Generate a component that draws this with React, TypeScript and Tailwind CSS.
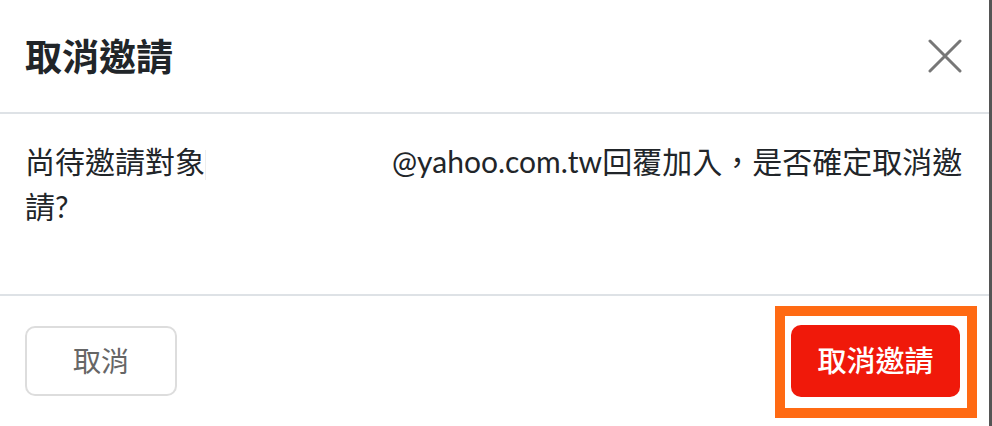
import React from 'react';

const font = { fontFamily: "Lato, 'Noto Sans CJK TC', sans-serif" };

function CloseIcon() {
  return (
    <svg width="34" height="34" viewBox="0 0 34 34" fill="none">
      <path d="M2 2L32 32M32 2L2 32" stroke="#777" strokeWidth="3" strokeLinecap="round" />
    </svg>
  );
}

export default function App() {
  return (
    <div className="w-[992px] h-[426px] bg-white border-r-[3px] border-[#555] flex flex-col" style={font}>
      {/* header */}
      <div className="h-[114px] shrink-0 flex items-center justify-between pl-[25px] pr-[27px] border-b-2 border-[#dee2e6]">
        <h1 className="text-[37px] font-bold text-[#212529] leading-none">取消邀請</h1>
        <button className="p-0">
          <CloseIcon />
        </button>
      </div>

      {/* body */}
      <div className="h-[182px] shrink-0 pl-[25px] pr-[25px] pt-[25px] border-b-2 border-[#dee2e6]">
        <p className="text-[30px] leading-[45px] text-[#212529]">
          尚待邀請對象
          <span className="inline-block w-[187px] h-[30px] align-middle border-l border-[#eeeeee]"></span>
          @yahoo.com.tw回覆加入，是否確定取消邀請?
        </p>
      </div>

      {/* footer */}
      <div className="flex-1 flex items-start justify-between pl-[25px] pr-[12px] pt-[10px]">
        <button className="mt-[20px] w-[152px] h-[70px] rounded-[10px] border-2 border-[#dddddd] bg-white text-[28px] text-[#666] hover:bg-gray-50">
          取消
        </button>
        <div className="border-[10px] border-[#ff6a13] pl-[6px] pr-[7px] pt-[9px] pb-[11px]">
          <button className="w-[169px] h-[72px] rounded-[10px] bg-[#f0190a] text-white text-[29px] font-medium">
            取消邀請
          </button>
        </div>
      </div>
    </div>
  );
}
